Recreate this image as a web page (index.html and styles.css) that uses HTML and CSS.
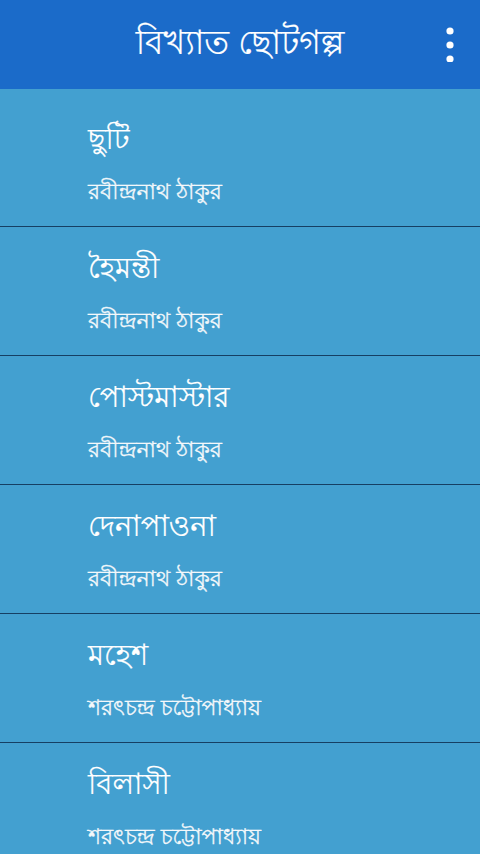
FILE: index.html
```html
<!DOCTYPE html>
<html lang="bn"><head><meta charset="utf-8"><link rel="stylesheet" href="styles.css"></head>
<body>
<div class="app">
  <header class="topbar">
    <h1 class="title">বিখ্যাত ছোটগল্প</h1>
    <button class="menu" aria-label="menu">
      <svg width="12" height="36" viewBox="0 0 12 36"><circle cx="6" cy="5" r="3.6" fill="#fff"/><circle cx="6" cy="19" r="3.6" fill="#fff"/><circle cx="6" cy="33" r="3.6" fill="#fff"/></svg>
    </button>
  </header>
  <ul class="list">
    <li class="item"><div class="name">ছুটি</div><div class="author">রবীন্দ্রনাথ ঠাকুর</div></li>
    <li class="item"><div class="name">হৈমন্তী</div><div class="author">রবীন্দ্রনাথ ঠাকুর</div></li>
    <li class="item"><div class="name">পোস্টমাস্টার</div><div class="author">রবীন্দ্রনাথ ঠাকুর</div></li>
    <li class="item"><div class="name">দেনাপাওনা</div><div class="author">রবীন্দ্রনাথ ঠাকুর</div></li>
    <li class="item"><div class="name">মহেশ</div><div class="author">শরৎচন্দ্র চট্টোপাধ্যায়</div></li>
    <li class="item"><div class="name">বিলাসী</div><div class="author">শরৎচন্দ্র চট্টোপাধ্যায়</div></li>
  </ul>
</div>
</body></html>
```
FILE: styles.css
```css
html,body{margin:0;padding:0}
body{width:480px;height:854px;overflow:hidden;background:#43a0d0;font-family:"Lohit Bengali","Noto Sans",sans-serif;color:#fff}
.app{display:flex;flex-direction:column}
.topbar{height:89px;background:#1b6bc9;display:flex;align-items:center;justify-content:center;position:relative}
.title{margin:0;font-weight:normal;font-size:33px;line-height:1;color:#fff;-webkit-text-stroke:0.2px #fff}
.menu{position:absolute;right:24px;top:26px;background:none;border:0;padding:0;width:12px;height:36px}
.menu svg{display:block}
.list{list-style:none;margin:0;padding:9px 0 0 0;background:#43a0d0}
.item{height:128px;border-bottom:1px solid #163f63;padding-left:88px;display:flex;flex-direction:column;box-sizing:content-box}
.name{font-size:29px;line-height:1;margin-top:28px;color:#fff;-webkit-text-stroke:0.2px #fff}
.author{font-size:22px;line-height:1;margin-top:27px;color:#f4f8fb;-webkit-text-stroke:0.3px #f4f8fb}
```
